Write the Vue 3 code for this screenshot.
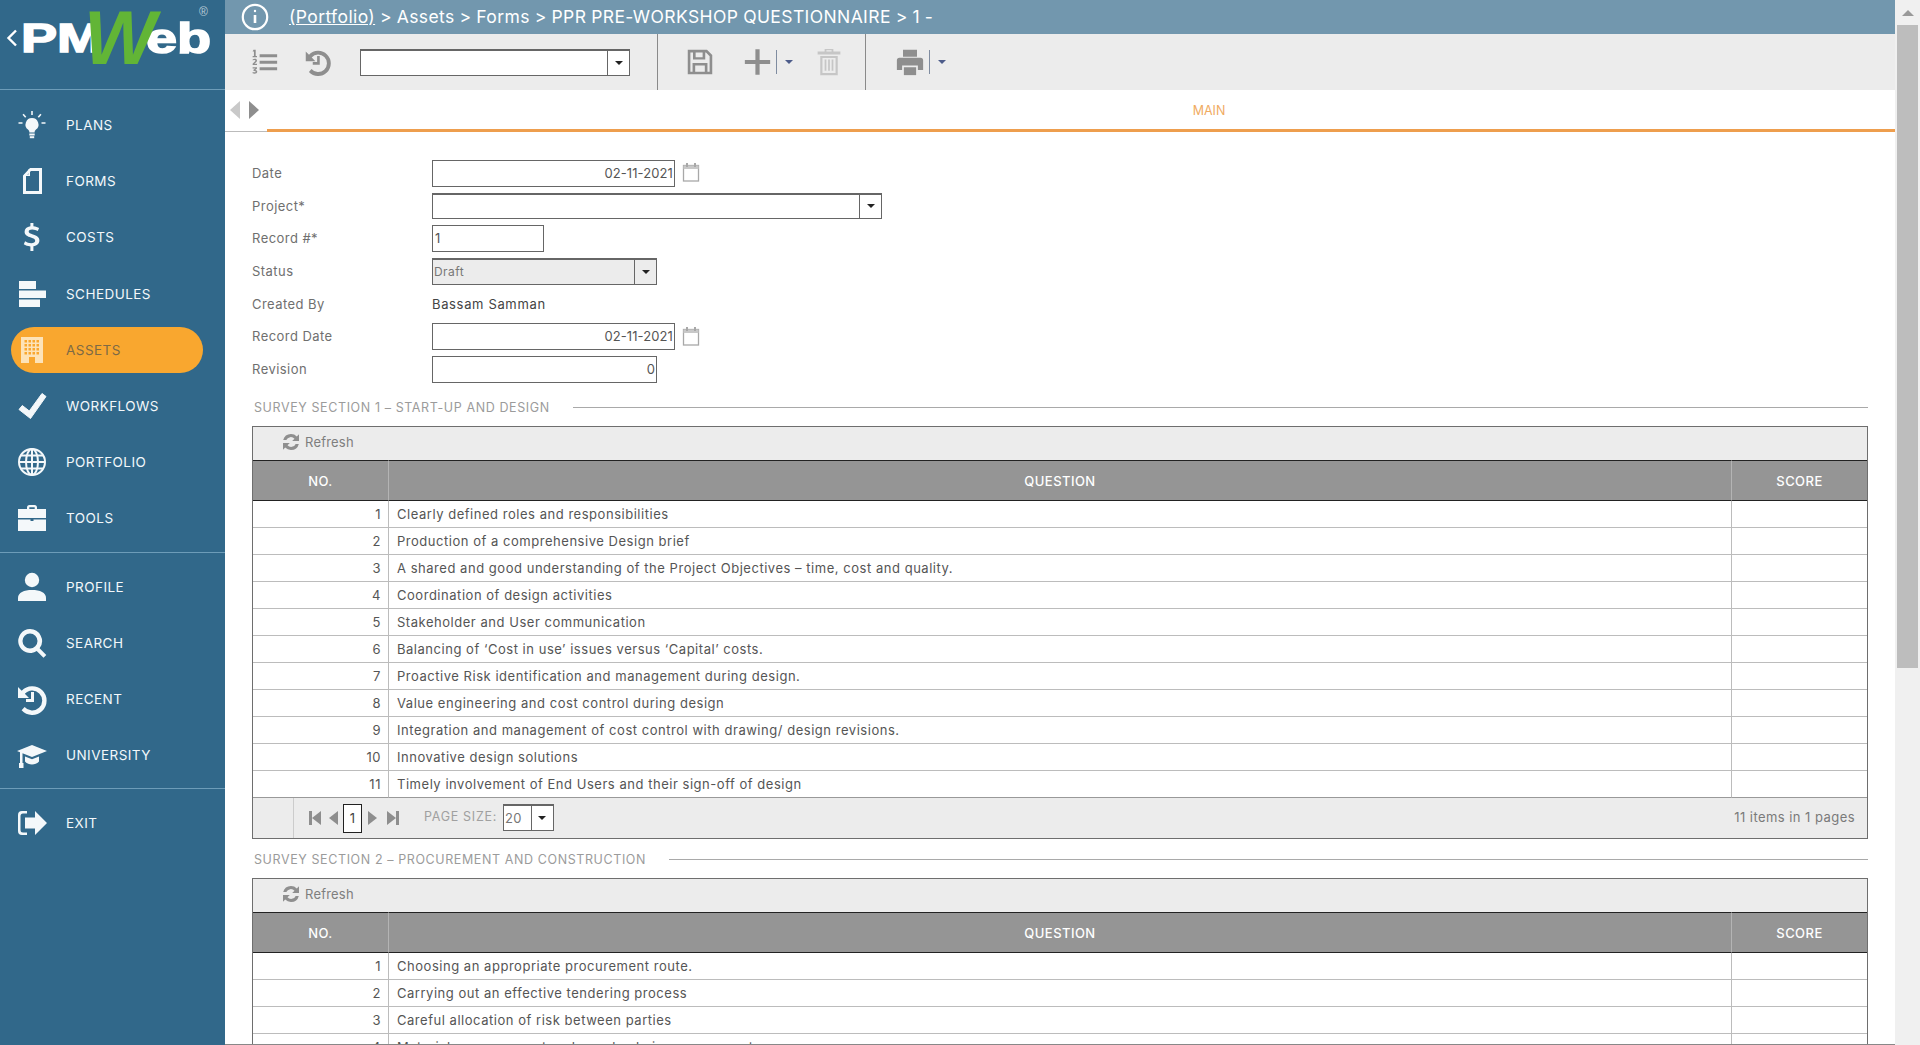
<template>
  <div class="app">
    <aside class="sidebar">
      <div class="logo">
        <svg class="logo-back" width="12" height="18" viewBox="0 0 12 18"><path d="M10 1.500 2.500 9l7.500 7.500" fill="none" stroke="#fff" stroke-width="2.400" /></svg>
        <span class="logo-pm">PM</span>
        <span class="logo-eb">eb</span>
        <span class="logo-w">W</span>
        <span class="logo-reg">®</span>
      </div>
      <nav v-for="(group, g) in nav" :key="g" class="nav-group">
        <a v-for="item in group" :key="item.label" class="nav-item" :class="{ active: item.label === 'ASSETS' }">
          <svg class="nav-icon" viewBox="0 0 32 32" fill="currentColor" v-html="icons[item.icon]"></svg>
          <span>{{ item.label }}</span>
        </a>
      </nav>
    </aside>

    <main class="main">
      <header class="topbar">
        <svg width="28" height="28" viewBox="0 0 28 28" fill="none" stroke="#fff" class="info">
          <circle cx="14" cy="14" r="12.200" stroke-width="2.200" />
          <path d="M14 12v8" stroke-width="2.600" />
          <circle cx="14" cy="8" r="1.200" fill="#fff" stroke="none" />
        </svg>
        <span class="crumbs"><u>(Portfolio)</u> &gt; Assets &gt; Forms &gt; PPR PRE-WORKSHOP QUESTIONNAIRE &gt; 1 -</span>
      </header>

      <div class="toolbar">
        <div class="tool-group first">
          <svg class="tool" viewBox="0 0 32 32" fill="currentColor" v-html="icons.list"></svg>
          <svg class="tool" viewBox="0 0 32 32" fill="currentColor" v-html="icons.recent"></svg>
          <div class="select view-select"><span class="select-text"></span><span class="select-btn"><i></i></span></div>
        </div>
        <div class="tool-group second">
          <svg class="tool" viewBox="0 0 32 32" fill="currentColor" v-html="icons.save"></svg>
          <svg class="tool plus" viewBox="0 0 32 32" fill="currentColor" v-html="icons.plus"></svg>
          <span class="split"></span><i class="mini-caret"></i>
          <svg class="tool trash" viewBox="0 0 32 32" fill="currentColor" v-html="icons.trash"></svg>
        </div>
        <div class="tool-group third">
          <svg class="tool" viewBox="0 0 32 32" fill="currentColor" v-html="icons.print"></svg>
          <span class="split"></span><i class="mini-caret"></i>
        </div>
      </div>

      <div class="tabs">
        <div class="tab-arrows">
          <i class="arrow-left"></i>
          <i class="arrow-right"></i>
        </div>
        <div class="tab-main">MAIN</div>
      </div>

      <div class="content">
        <form class="form">
          <div class="field">
            <label>Date</label>
            <div class="input date">02-11-2021</div>
            <svg class="cal" width="18" height="20" viewBox="0 0 18 20" fill="none" stroke="#a8a8a8" v-html="icons.calendar"></svg>
          </div>
          <div class="field">
            <label>Project*</label>
            <div class="select project"><span class="select-text"></span><span class="select-btn"><i></i></span></div>
          </div>
          <div class="field">
            <label>Record #*</label>
            <div class="input record">1</div>
          </div>
          <div class="field">
            <label>Status</label>
            <div class="select status"><span class="select-text">Draft</span><span class="select-btn"><i></i></span></div>
          </div>
          <div class="field">
            <label>Created By</label>
            <span class="value">Bassam Samman</span>
          </div>
          <div class="field">
            <label>Record Date</label>
            <div class="input date">02-11-2021</div>
            <svg class="cal" width="18" height="20" viewBox="0 0 18 20" fill="none" stroke="#a8a8a8" v-html="icons.calendar"></svg>
          </div>
          <div class="field">
            <label>Revision</label>
            <div class="input revision">0</div>
          </div>
        </form>

        <section v-for="section in sections" :key="section.title" class="section">
          <div class="section-title"><span>{{ section.title }}</span></div>
          <div class="grid">
            <div class="grid-toolbar">
              <svg width="20" height="20" viewBox="0 0 20 20" fill="#8f8f8f">
                <path d="M10 2a8 8 0 0 1 5.800 2.400L18 2.200V9h-6.800l2.300-2.300A5 5 0 0 0 5.300 8H2.200A8 8 0 0 1 10 2Z" />
                <path d="M10 18a8 8 0 0 1-5.800-2.400L2 17.800V11h6.800l-2.300 2.300A5 5 0 0 0 14.700 12h3.100A8 8 0 0 1 10 18Z" />
              </svg>
              <span>Refresh</span>
            </div>
            <table>
              <colgroup><col class="col-no" /><col /><col class="col-score" /></colgroup>
              <thead>
                <tr><th>NO.</th><th>QUESTION</th><th>SCORE</th></tr>
              </thead>
              <tbody>
                <tr v-for="(q, i) in section.questions" :key="i">
                  <td class="num">{{ i + 1 }}</td>
                  <td>{{ q }}</td>
                  <td></td>
                </tr>
              </tbody>
            </table>
            <div v-if="section.pager" class="pager">
              <span class="pager-spacer"></span>
              <div class="pager-nav">
                <i class="pg first-pg"></i>
                <i class="pg prev-pg"></i>
                <span class="pg-num">1</span>
                <i class="pg next-pg"></i>
                <i class="pg last-pg"></i>
              </div>
              <span class="page-size">PAGE SIZE:</span>
              <div class="select size"><span class="select-text">20</span><span class="select-btn"><i></i></span></div>
              <span class="items">11 items in 1 pages</span>
            </div>
          </div>
        </section>
      </div>
    </main>

    <div class="scrollbar">
      <div class="scroll-up"><i></i></div>
      <div class="scroll-thumb"></div>
    </div>
  </div>
</template>

<script setup>
const nav = [
  [
    { label: 'PLANS', icon: 'bulb' },
    { label: 'FORMS', icon: 'page' },
    { label: 'COSTS', icon: 'dollar' },
    { label: 'SCHEDULES', icon: 'bars' },
    { label: 'ASSETS', icon: 'building' },
    { label: 'WORKFLOWS', icon: 'check' },
    { label: 'PORTFOLIO', icon: 'globe' },
    { label: 'TOOLS', icon: 'case' }
  ],
  [
    { label: 'PROFILE', icon: 'person' },
    { label: 'SEARCH', icon: 'search' },
    { label: 'RECENT', icon: 'recent' },
    { label: 'UNIVERSITY', icon: 'cap' }
  ],
  [{ label: 'EXIT', icon: 'exit' }]
]

// inner svg markup, all on a 32 box
const icons = {
  bulb: '<path d="M16 9a6.500 6.500 0 0 0-4 11.600c1 .9 1.300 1.700 1.400 2.900h5.200c.1-1.200.4-2 1.400-2.900A6.500 6.500 0 0 0 16 9Z"/><rect x="13.300" y="24.500" width="5.400" height="2"/><rect x="13.800" y="27.200" width="4.400" height="2"/><path d="M15.200 2h1.600v4h-1.600zM2.500 13.200h4v1.600h-4zM25.500 13.200h4v1.600h-4zM6.500 5.800l1.200-1.100 2.600 3-1.200 1zM25.500 5.800l-1.200-1.100-2.600 3 1.200 1z"/>',
  page: '<path fill-rule="evenodd" d="M14 3h12v26H7V10.500L14 3Zm1 3L10 11v15h13V6h-8Z"/><path d="M14 4v7H8v-1.500h4.500V4Z"/>',
  dollar: '<path d="M14.400 2h3v3.300c2.400.2 4.300.9 5.700 1.800l-1.300 3c-1.500-.9-3.400-1.700-5.600-1.700-2.300 0-3.500.9-3.500 2.200 0 1.500 1.500 2.100 4.300 3 3.900 1.200 6.400 2.700 6.400 6 0 3-2.300 5.200-6 5.700V30h-3v-4.600c-2.600-.2-5-1-6.600-2.100l1.300-3.100c1.700 1.100 3.900 2 6.200 2 2.500 0 3.900-1 3.900-2.500 0-1.600-1.500-2.300-4.300-3.200-3.500-1.100-6.300-2.500-6.300-5.800 0-2.800 2.100-4.900 5.800-5.400Z"/>',
  bars: '<rect x="3" y="3" width="17" height="8"/><rect x="3" y="12.500" width="27" height="7.500"/><rect x="3" y="21.500" width="21" height="7.500"/>',
  building: '<path fill-rule="evenodd" d="M5 3h22v26H19v-6h-6v6H5V3Zm3.500 3v2.500H11V6Zm4 0v2.500H15V6Zm4 0v2.500H19V6Zm4 0v2.500H23V6Zm-12 4v2.500H11V10Zm4 0v2.500H15V10Zm4 0v2.500H19V10Zm4 0v2.500H23V10Zm-12 4v2.500H11V14Zm4 0v2.500H15V14Zm4 0v2.500H19V14Zm4 0v2.500H23V14Zm-12 4v2.500H11V18Zm4 0v2.500H15V18Zm4 0v2.500H19V18Zm4 0v2.500H23V18Z"/>',
  check: '<path d="M26 3.500 30 6.500 14.500 28.500 3 19.500l3.300-4 7 5.500Z" stroke="currentColor" stroke-linejoin="round"/>',
  globe: '<g fill="none" stroke="currentColor" stroke-width="2"><circle cx="16" cy="16" r="13"/><ellipse cx="16" cy="16" rx="6" ry="13"/><path d="M16 3v26M3 16h26M5 9.500h22M5 22.500h22"/></g>',
  case: '<path fill-rule="evenodd" d="M11 7V5.500A2.500 2.500 0 0 1 13.500 3h5A2.500 2.500 0 0 1 21 5.500V7h9v9H2V7h9Zm2.300 0h5.400V5.300h-5.400V7Z"/><path d="M2 17.500h12.500V19h3v-1.500H30V29H2Z"/>',
  person: '<circle cx="16" cy="9" r="7.200"/><path d="M2 30v-3c0-5.500 6-8 14-8s14 2.500 14 8v3Z"/>',
  search: '<path fill-rule="evenodd" d="M14 2a12 12 0 0 1 9.600 19.200l6.700 6.700-2.800 2.800-6.800-6.600A12 12 0 1 1 14 2Zm0 4.500a7.500 7.500 0 1 0 0 15 7.500 7.500 0 0 0 0-15Z"/>',
  recent: '<path fill-rule="evenodd" d="M2 4v11h11l-4.200-4.200A10 10 0 1 1 8.600 24l-3 3.300A14.400 14.400 0 1 0 5.700 7.700Z"/><path d="M15 9h3v10h-8v-3h5Z"/>',
  cap: '<path d="M16 6 31 12l-15 6-9.500-3.800V24h1v5H3v-5h1v-10.800L1 12Z"/><path d="M9 17.500l7 2.800 7-2.800v5c-1.500 2-4 3-7 3s-5.500-1-7-3Z"/>',
  exit: '<path d="M11 4H6a4 4 0 0 0-4 4v16a4 4 0 0 0 4 4h5v-2.500H7A2.500 2.500 0 0 1 4.500 23V9A2.500 2.500 0 0 1 7 6.500h4Z"/><path d="M19 4v6.500H9v11h10V28l12-12Z"/>',
  list: '<path d="M11 7h20v3.500H11ZM11 14.500h20V18H11ZM11 22h20v3.500H11Z"/><path d="M4 2h2.500v7H8v1.500H3V9h1.500V4H3ZM3 13c2-1.200 5-1 5 1.200 0 1.500-1.600 2.300-3 3.800h3v1.500H3V18c1.600-1.700 3.200-2.600 3.200-3.600 0-.9-1.700-.7-3-.1ZM3 22h5v1.500l-2 1.700c1.500.1 2.300.9 2.300 2 0 2-3 2.700-5.300 1.700v-1.500c1.600.6 3.500.5 3.500-.3s-1-.9-2.500-.9v-1.300l2-1.500H3Z"/>',
  save: '<path fill-rule="evenodd" d="M2 2h22l6 6v22H2V2Zm3 3v22h2.500V17h17v10H27V9.300L22.800 5H22v8H8V5H5Zm6 0v5.500h8V5Zm-.500 15v7h11v-7Z"/>',
  plus: '<path d="M13.500 1h5v12.500H31v5H18.500V31h-5V18.500H1v-5h12.500Z"/>',
  trash: '<path fill-rule="evenodd" d="M11 1h10v3h8v3.500H3V4h8V1Zm2 1.500V4h6V2.500ZM6 9h20v22H6V9Zm2.500 2.500v17h15v-17ZM11 13h2v13h-2Zm4 0h2v13h-2Zm4 0h2v13h-2Z"/>',
  print: '<path fill-rule="evenodd" d="M8 2h16v8H8ZM4 11h24a3 3 0 0 1 3 3v11h-6v-5H7v5H1V14a3 3 0 0 1 3-3Z"/><path d="M9 22h14v9H9Z"/>',
  calendar: '<rect x="1.500" y="3.500" width="15" height="15.500" stroke-width="1.300"/><path d="M1.500 3.500h15v3.500h-15z" fill="#c8c8c8" stroke="none"/><path d="M5 1v4M13 1v4" stroke-width="2"/>'
}

const sections = [
  {
    title: 'SURVEY SECTION 1 – START-UP AND DESIGN',
    pager: true,
    questions: [
      'Clearly defined roles and responsibilities',
      'Production of a comprehensive Design brief',
      'A shared and good understanding of the Project Objectives – time, cost and quality.',
      'Coordination of design activities',
      'Stakeholder and User communication',
      'Balancing of ‘Cost in use’ issues versus ‘Capital’ costs.',
      'Proactive Risk identification and management during design.',
      'Value engineering and cost control during design',
      'Integration and management of cost control with drawing/ design revisions.',
      'Innovative design solutions',
      'Timely involvement of End Users and their sign-off of design'
    ]
  },
  {
    title: 'SURVEY SECTION 2 – PROCUREMENT AND CONSTRUCTION',
    pager: false,
    questions: [
      'Choosing an appropriate procurement route.',
      'Carrying out an effective tendering process',
      'Careful allocation of risk between parties',
      'Materials procurement and supply chain management'
    ]
  }
]
</script>

<style scoped>
.app {
  display: flex;
  width: 1920px;
  height: 1045px;
  overflow: hidden;
  background: #fff;
  font-family: Inter, "Open Sans", sans-serif;
  font-size: 13px;
  letter-spacing: .45px;
  color: #4a4a4a;
}

/* sidebar */
.sidebar {
  width: 225px;
  flex: none;
  background: #31688a;
  color: #fff;
}

.logo {
  height: 90px;
  box-sizing: border-box;
  display: flex;
  align-items: flex-start;
  position: relative;
  padding: 15px 0 0 6px;
  border-bottom: 1px solid #6d9cb8;
  font-family: "Liberation Sans", Arial, sans-serif;
  font-weight: 700;
  color: #fff;
  letter-spacing: 0;
}

.logo-back {
  margin-top: 14px;
  margin-right: 3px;
}

.logo-pm {
  font-size: 41px;
  line-height: 46px;
  -webkit-text-stroke: 1.500px #fff;
  transform: scaleX(1.32);
  transform-origin: left;
  width: 64px;
}

.logo-w {
  position: absolute;
  left: 84px;
  top: 0;
  font-size: 76px;
  line-height: 76px;
  font-style: italic;
  color: #62b536;
}

.logo-eb {
  position: absolute;
  left: 146px;
  top: 15px;
  font-size: 43px;
  line-height: 46px;
  -webkit-text-stroke: 1.500px #fff;
  transform: scaleX(1.3);
  transform-origin: left;
}

.logo-reg {
  position: absolute;
  left: 199px;
  top: 5px;
  font-size: 12px;
  font-weight: 400;
  color: #b9cbd7;
}

.nav-group {
  padding: 11px 0 0;
  border-bottom: 1px solid #6d9cb8;
}

.nav-group:first-of-type {
  padding-top: 12px;
}

.nav-group:last-child {
  border-bottom: none;
}

.nav-item {
  height: 46px;
  margin: 0 22px 10.200px 11px;
  display: flex;
  align-items: center;
  padding-left: 5px;
  border-radius: 23px;
  font-size: 13.500px;
  color: #f3f8fb;
}

.nav-item.active {
  background: #f9a72f;
  color: #7d6a45;
}

.nav-item.active .nav-icon {
  color: #fde3b8;
}

.nav-icon {
  width: 32px;
  height: 32px;
  flex: none;
  margin-right: 18px;
  color: #f4f8fa;
}

/* main column */
.main {
  flex: 1;
  min-width: 0;
  display: flex;
  flex-direction: column;
}

.topbar {
  height: 34px;
  flex: none;
  background: #7297ae;
  color: #fff;
  display: flex;
  align-items: center;
  padding-left: 16px;
}

.info {
  margin-right: 20px;
}

.crumbs {
  font-size: 17.500px;
  letter-spacing: .4px;
  word-spacing: -.5px;
  padding-bottom: 2px;
}

.toolbar {
  height: 56px;
  flex: none;
  background: #ececec;
  display: flex;
  color: #8e8e8e;
}

.tool-group {
  display: flex;
  align-items: center;
  height: 100%;
  box-sizing: border-box;
  border-right: 1px solid #8a8a8a;
}

.tool-group.first {
  width: 433px;
  padding-left: 25px;
}

.tool-group.second {
  width: 208px;
  padding-left: 28px;
}

.tool-group.third {
  padding-left: 30px;
  border-right: none;
}

.tool {
  width: 28px;
  height: 28px;
  flex: none;
}

.first .tool {
  margin-right: 26px;
}

.first .tool + .tool {
  margin-right: 28px;
}

.second .tool.plus {
  margin-left: 30px;
  width: 27px;
}

.trash {
  margin-left: 22px;
  color: #c6c6c6;
}

.split {
  width: 1px;
  height: 24px;
  background: #7f8ca0;
  margin: 0 8px 0 5px;
}

.mini-caret {
  width: 0;
  height: 0;
  border: 4px solid transparent;
  border-top: 4px solid #4d5c8a;
  border-bottom: none;
}

.select {
  display: flex;
  box-sizing: border-box;
  height: 27px;
  border: 1px solid #666;
  border-top-width: 2px;
  background: #fff;
}

.select-text {
  flex: 1;
  min-width: 0;
  padding-left: 1px;
  line-height: 24px;
  font-size: 12px;
  color: #777;
}

.select-btn {
  width: 21px;
  flex: none;
  display: flex;
  align-items: center;
  justify-content: center;
  border-left: 1px solid #666;
  background: #fff;
}

.select-btn i {
  width: 0;
  height: 0;
  border: 4px solid transparent;
  border-top: 4px solid #222;
  border-bottom: none;
}

.view-select {
  width: 270px;
  height: 27px;
}

.tabs {
  height: 43px;
  flex: none;
  display: flex;
}

.tab-arrows {
  width: 42px;
  flex: none;
  box-sizing: border-box;
  padding: 11px 0 0 5px;
  display: flex;
  gap: 9px;
  border-bottom: 1px solid #bbb;
  height: 42px;
}

.tab-arrows i {
  width: 0;
  height: 0;
  border: 9px solid transparent;
  border-left: none;
  border-right: 10px solid #c9c9c9;
}

.tab-arrows .arrow-right {
  border: 9px solid transparent;
  border-right: none;
  border-left: 10px solid #8e8e8e;
}

.tab-main {
  flex: 1;
  height: 42px;
  box-sizing: border-box;
  border-bottom: 3px solid #ee9e4e;
  text-align: center;
  padding: 13px 0 0 256px;
  font-size: 12.500px;
  letter-spacing: 0;
  color: #f0ab62;
  line-height: 16px;
}

.content {
  flex: 1;
  min-height: 0;
  overflow: hidden;
  padding: 24px 27px 0;
  border-bottom: 1px solid #888;
}

.form {
  display: flex;
  flex-direction: column;
  height: 229px;
}

.field {
  display: flex;
  align-items: center;
  flex: 1;
}

.field label {
  width: 180px;
  flex: none;
  color: #6f6f6f;
  font-size: 13px;
  padding-bottom: 1px;
}

.input {
  box-sizing: border-box;
  height: 27px;
  border: 1px solid #666;
  background: #fff;
  line-height: 25px;
  padding: 0 1px 0 2px;
  font-size: 13px;
  letter-spacing: .1px;
  color: #555;
}

.date {
  width: 243px;
  text-align: right;
}

.record {
  width: 112px;
}

.revision {
  width: 225px;
  text-align: right;
}

.project {
  width: 450px;
  height: 26px;
  margin-bottom: 1px;
}

.status {
  width: 225px;
}

.status .select-text {
  background: #ececec;
  color: #777;
}

.status .select-btn {
  background: #ececec;
}

.value {
  color: #444;
  letter-spacing: .65px;
}

.cal {
  margin-left: 7px;
  margin-bottom: 2px;
}

.section-title {
  display: flex;
  align-items: center;
  height: 20px;
  padding-left: 2px;
  color: #9b9b9b;
  font-size: 12.500px;
  letter-spacing: .6px;
}

.section-title::after {
  content: "";
  flex: 1;
  height: 1px;
  background: #a9a9a9;
  margin-left: 23px;
}

.section {
  margin-top: 11px;
}

.section + .section {
  margin-top: 10px;
}

.grid {
  margin-top: 9px;
  border: 1px solid #6e6e6e;
}

.grid-toolbar {
  height: 33px;
  box-sizing: border-box;
  padding: 0 0 3px 28px;
  background: #ececec;
  display: flex;
  align-items: center;
  gap: 4px;
  color: #7e7e7e;
  letter-spacing: .2px;
}

table {
  width: 100%;
  table-layout: fixed;
  border-collapse: separate;
  border-spacing: 0;
}

.col-no {
  width: 136px;
}

.col-score {
  width: 135px;
}

th {
  box-sizing: border-box;
  height: 41px;
  background: #959595;
  border-top: 1px solid #222;
  border-bottom: 1px solid #222;
  border-right: 1px solid #b4b4b4;
  color: #fff;
  font-weight: 500;
  font-size: 13px;
  padding: 0;
}

th:last-child {
  border-right: none;
}

td {
  box-sizing: border-box;
  height: 27px;
  border-bottom: 1px solid #bcbcbc;
  border-right: 1px solid #bcbcbc;
  padding: 0 0 0 8px;
  color: #555;
  letter-spacing: .53px;
  white-space: nowrap;
}

td:last-child {
  border-right: none;
}

td.num {
  text-align: right;
  padding: 0 7px 0 0;
}

tr:last-child td {
  border-bottom-color: #999;
}

.pager {
  height: 40px;
  background: #ececec;
  display: flex;
  align-items: center;
  color: #8a8a8a;
}

.pager-spacer {
  width: 40px;
  height: 100%;
  flex: none;
  border-right: 1px solid #ccc;
}

.pager-nav {
  display: flex;
  align-items: center;
  margin-left: 15px;
}

.pg {
  width: 0;
  height: 0;
  border: 7px solid transparent;
  border-left: none;
  border-right: 9px solid #8e8e8e;
  position: relative;
}

.first-pg {
  margin-right: 8px;
  margin-left: 3px;
}

.first-pg::before,
.last-pg::before {
  content: "";
  position: absolute;
  top: -7px;
  width: 3px;
  height: 14px;
  background: #8e8e8e;
}

.first-pg::before {
  left: -3px;
}

.prev-pg {
  margin-right: 5px;
}

.next-pg {
  border: 7px solid transparent;
  border-right: none;
  border-left: 9px solid #8e8e8e;
  margin-left: 6px;
  margin-right: 10px;
}

.last-pg {
  border: 7px solid transparent;
  border-right: none;
  border-left: 9px solid #8e8e8e;
}

.last-pg::before {
  left: 0;
}

.pg-num {
  box-sizing: border-box;
  width: 19px;
  height: 29px;
  border: 1px solid #222;
  background: #fff;
  text-align: center;
  line-height: 27px;
  color: #444;
}

.page-size {
  margin: 0 0 3px 28px;
  color: #a0a0a0;
  font-size: 12.500px;
  letter-spacing: .7px;
}

.size {
  width: 51px;
  height: 27px;
  margin: 0 0 2px 6px;
}

.size .select-text {
  font-size: 13px;
}

.items {
  margin: 0 12px 3px auto;
  color: #7a7a7a;
}

/* browser scrollbar */
.scrollbar {
  width: 25px;
  flex: none;
  background: #f0f0f0;
  display: flex;
  flex-direction: column;
  align-items: center;
}

.scroll-up {
  height: 25px;
  width: 100%;
  flex: none;
  display: flex;
  align-items: center;
  justify-content: center;
}

.scroll-up i {
  width: 0;
  height: 0;
  border: 6px solid transparent;
  border-top: none;
  border-bottom: 6px solid #999;
}

.scroll-thumb {
  width: 21px;
  height: 643px;
  background: #bdbdbd;
}
</style>

<style>
html, body {
  margin: 0;
  overflow: hidden;
}
</style>
